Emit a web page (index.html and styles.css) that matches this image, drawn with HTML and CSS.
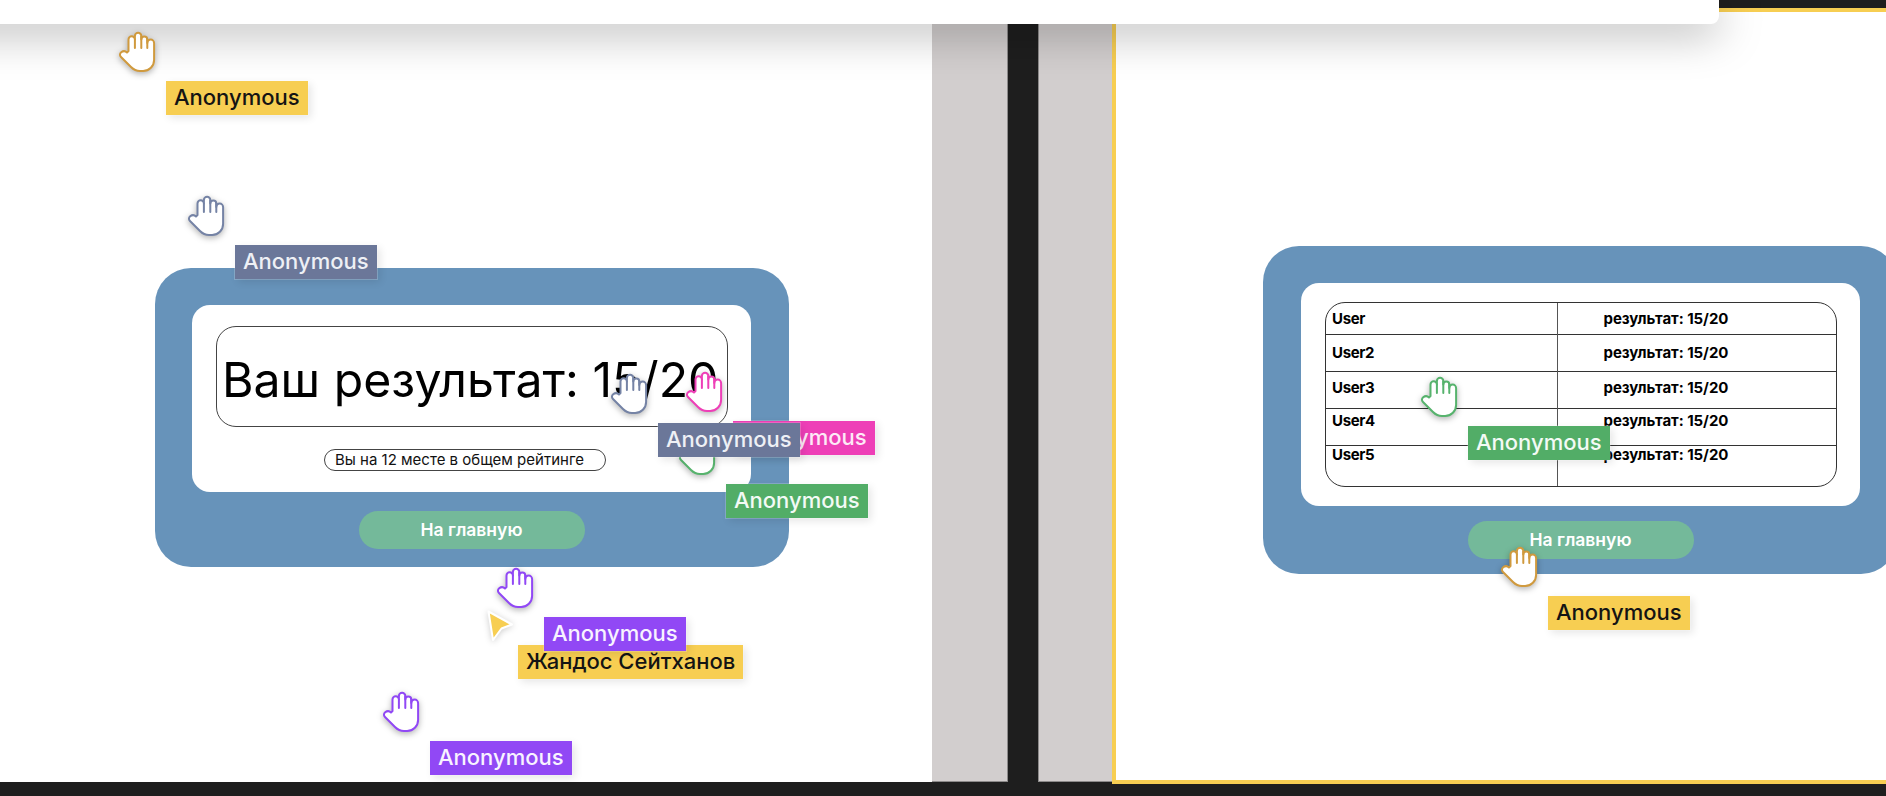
FILE: index.html
```html
<!DOCTYPE html>
<html lang="en">
<head>
  <meta charset="UTF-8" />
  <title>Результаты</title>
  <link rel="stylesheet" href="styles.css">
</head>

<body>
  <!-- Shared hand cursor -->
  <svg class="sprites" width="0" height="0">
    <symbol id="hand" viewBox="0 0 37 41">
      <path fill="#fff" stroke="currentColor" stroke-width="2" stroke-linejoin="round" d="M9.5 20V8.5a3.2 3.2 0 0 1 6.4 0V5a3.2 3.2 0 0 1 6.4 0V8.5a3 3 0 0 1 6 0V12a3.4 3.4 0 0 1 6.8 0V29a11 11 0 0 1-11 11H21c-4 0-6.500-1.500-9-4L2 26c-1.500-1.500-1.300-3.500.2-4.700 2-1.600 4.300-1.300 5.800.2z"/>
      <path fill="none" stroke="currentColor" stroke-width="2" stroke-linecap="round" d="M15.900 8.500V17M22.300 5.500V17M28.300 8.500V17"/>
    </symbol>
  </svg>

  <div class="stage">
    <!-- Left page -->
    <section class="page">
      <div class="canvas">
        <div class="card card-result">
          <div class="sheet sheet-result">
            <h1 class="score">Ваш результат: 15/20</h1>
            <p class="rank">Вы на 12 месте в общем рейтинге</p>
          </div>
          <a class="home-btn">На главную</a>
        </div>
      </div>
      <div class="gutter gutter-left"></div>
    </section>

    <!-- Right page -->
    <section class="page page-right">
      <div class="gutter gutter-right"></div>
      <div class="frame">
        <div class="card card-table">
          <div class="sheet sheet-table">
            <div class="table-wrap">
              <table class="board">
                <tr><td>User</td><td>результат: 15/20</td></tr>
                <tr><td>User2</td><td>результат: 15/20</td></tr>
                <tr><td>User3</td><td>результат: 15/20</td></tr>
                <tr><td>User4</td><td>результат: 15/20</td></tr>
                <tr><td>User5</td><td>результат: 15/20</td></tr>
              </table>
            </div>
          </div>
          <a class="home-btn">На главную</a>
        </div>
      </div>
    </section>
  </div>

  <!-- Popup edge over everything -->
  <div class="popup"></div>

  <!-- Multiplayer cursors -->
  <div class="cursor c-gold-a gold">
    <svg class="hand"><use href="#hand"/></svg>
    <span class="tag">Anonymous</span>
  </div>
  <div class="cursor c-green-a green">
    <svg class="hand"><use href="#hand"/></svg>
    <span class="tag">Anonymous</span>
  </div>
  <div class="cursor c-pink pink">
    <svg class="hand"><use href="#hand"/></svg>
    <span class="tag">Anonymous</span>
  </div>
  <div class="cursor c-slate-a slate">
    <svg class="hand"><use href="#hand"/></svg>
    <span class="tag">Anonymous</span>
  </div>
  <div class="cursor c-slate-b slate">
    <svg class="hand"><use href="#hand"/></svg>
    <span class="tag">Anonymous</span>
  </div>
  <div class="cursor c-me gold">
    <svg class="arrow" viewBox="0 0 30 36">
      <path fill="#f7ce52" stroke="#fff" stroke-width="2" stroke-linejoin="round" d="M3.500 3.500L27 16.500 16.500 20.500 8 32z"/>
    </svg>
    <span class="tag">Жандос Сейтханов</span>
  </div>
  <div class="cursor c-violet-a violet">
    <svg class="hand"><use href="#hand"/></svg>
    <span class="tag">Anonymous</span>
  </div>
  <div class="cursor c-violet-b violet">
    <svg class="hand"><use href="#hand"/></svg>
    <span class="tag">Anonymous</span>
  </div>
  <div class="cursor c-green-b green">
    <svg class="hand"><use href="#hand"/></svg>
    <span class="tag">Anonymous</span>
  </div>
  <div class="cursor c-gold-b gold">
    <svg class="hand"><use href="#hand"/></svg>
    <span class="tag">Anonymous</span>
  </div>
</body>
</html>
```

FILE: styles.css
```css
/* Base */
* {
  box-sizing: border-box;
}

html, body {
  margin: 0;
  height: 100%;
}

body {
  position: relative;
  width: 1886px;
  height: 796px;
  overflow: hidden;
  background: #1e1e1e;
  font-family: Inter, "Noto Sans", sans-serif;
  color: #000;
}

.sprites {
  position: absolute;
}

/* Pages */
.stage {
  display: flex;
  gap: 30px;
  height: 782px;
}

.page {
  display: flex;
  flex: 0 0 auto;
}

.canvas {
  width: 932px;
  padding: 268px 0 0 155px;
  background: #fff;
}

.gutter {
  width: 76px;
  background: #d2cece;
  border-bottom: 1px solid #8c8a8a;
}

.gutter-left {
  border-right: 1px solid #8c8a8a;
}

.gutter-right {
  width: 74px;
  border-left: 1px solid #8c8a8a;
}

.frame {
  width: 800px;
  height: 776px;
  margin-top: 8px;
  padding: 234px 0 0 147px;
  background: #fff;
  border: 4px solid #f7ce52;
}

/* Cards */
.card {
  display: flex;
  flex-direction: column;
  align-items: center;
  width: 634px;
  padding: 37px 38px 18px 37px;
  background: #6793ba;
  border-radius: 36px;
}

.card-table {
  padding: 37px 37px 15px 38px;
}

.sheet {
  align-self: stretch;
  background: #fff;
  border-radius: 18px;
}

.sheet-result {
  height: 187px;
  padding: 21px 23px 0 24px;
  margin-bottom: 19px;
}

.sheet-table {
  height: 223px;
  padding: 19px 23px 0 24px;
  margin-bottom: 15px;
}

.score {
  height: 101px;
  margin: 0;
  padding-left: 5px;
  border: 1px solid #444;
  border-radius: 20px;
  font-size: 48.200px;
  font-weight: 400;
  line-height: 105px;
  white-space: nowrap;
}

.rank {
  width: 282px;
  height: 22px;
  margin: 22px 0 0 108px;
  padding-left: 10px;
  border: 1px solid #444;
  border-radius: 11px;
  font-size: 15px;
  line-height: 20px;
  white-space: nowrap;
  color: #111;
}

.home-btn {
  width: 226px;
  height: 38px;
  background: #74b99a;
  border-radius: 19px;
  color: #fff;
  font-size: 17.500px;
  font-weight: 600;
  line-height: 38px;
  text-align: center;
}

/* Leaderboard */
.table-wrap {
  height: 185px;
  border: 1px solid #333;
  border-radius: 20px;
  overflow: hidden;
}

.board {
  width: 100%;
  height: 100%;
  border-collapse: collapse;
  table-layout: fixed;
  font-size: 15px;
  font-weight: 700;
  letter-spacing: -0.35px;
}

.board td {
  padding: 0 0 0 6px;
  vertical-align: top;
  border-top: 1px solid #333;
  line-height: 17px;
}

.board td + td {
  width: 279px;
  padding-left: 46px;
  border-left: 1px solid #555;
  letter-spacing: -0.05px;
}

.board tr:first-child td { border-top: 0; }

.board tr:nth-child(1) { height: 31px; }
.board tr:nth-child(2) { height: 37px; }
.board tr:nth-child(3) { height: 37px; }
.board tr:nth-child(4) { height: 37px; }
.board tr:nth-child(5) { height: 41px; }

.board tr:nth-child(1) td { padding-top: 7px; }
.board tr:nth-child(2) td { padding-top: 9px; }
.board tr:nth-child(3) td { padding-top: 7px; }
.board tr:nth-child(4) td { padding-top: 3px; }
.board tr:nth-child(5) td { padding-top: 0; }

/* Popup */
.popup {
  position: absolute;
  top: 0;
  left: -80px;
  width: 1799px;
  height: 24px;
  background: #fff;
  border-bottom-right-radius: 8px;
  box-shadow: 0 8px 44px rgba(0, 0, 0, 0.35);
}

/* Cursors */
.cursor {
  position: absolute;
  width: 37px;
  height: 41px;
  color: #fff;
}

.hand {
  display: block;
  width: 37px;
  height: 41px;
  overflow: visible;
  color: var(--hand);
  filter: drop-shadow(0 2px 3px rgba(0, 0, 0, 0.3));
}

.arrow {
  display: block;
  width: 30px;
  height: 36px;
  filter: drop-shadow(0 1px 3px rgba(0, 0, 0, 0.2));
}

.tag {
  position: absolute;
  left: 47px;
  top: 50px;
  height: 34px;
  padding: 0 8px;
  background: var(--tag);
  box-shadow: 0 0 0 1px rgba(255, 255, 255, 0.2), 3px 3px 8px rgba(0, 0, 0, 0.1);
  font-size: 22px;
  font-weight: 500;
  line-height: 33px;
  white-space: nowrap;
  color: var(--tag-text);
}

.gold { --tag: #f7ce52; --hand: #d09a3e; --tag-text: #141414; }
.slate { --tag: #6b7799; --hand: #7583a5; --tag-text: #eef0f5; }
.pink { --tag: #ee3fb7; --hand: #ee3fb7; --tag-text: #fdeaf6; }
.green { --tag: #52ad67; --hand: #57b36d; --tag-text: #f3faf5; }
.violet { --tag: #9148f5; --hand: #9148f5; --tag-text: #f8f3ff; }

.c-gold-a { left: 119px; top: 31px; }
.c-slate-a { left: 188px; top: 195px; }
.c-slate-b { left: 611px; top: 373px; }
.c-pink { left: 686px; top: 371px; }
.c-green-a { left: 679px; top: 434px; }
.c-violet-a { left: 497px; top: 567px; }
.c-violet-b { left: 383px; top: 691px; }
.c-green-b { left: 1421px; top: 376px; }
.c-gold-b { left: 1501px; top: 546px; }

.c-me { left: 485px; top: 608px; }
.c-me .tag { left: 33px; top: 37px; }
```
